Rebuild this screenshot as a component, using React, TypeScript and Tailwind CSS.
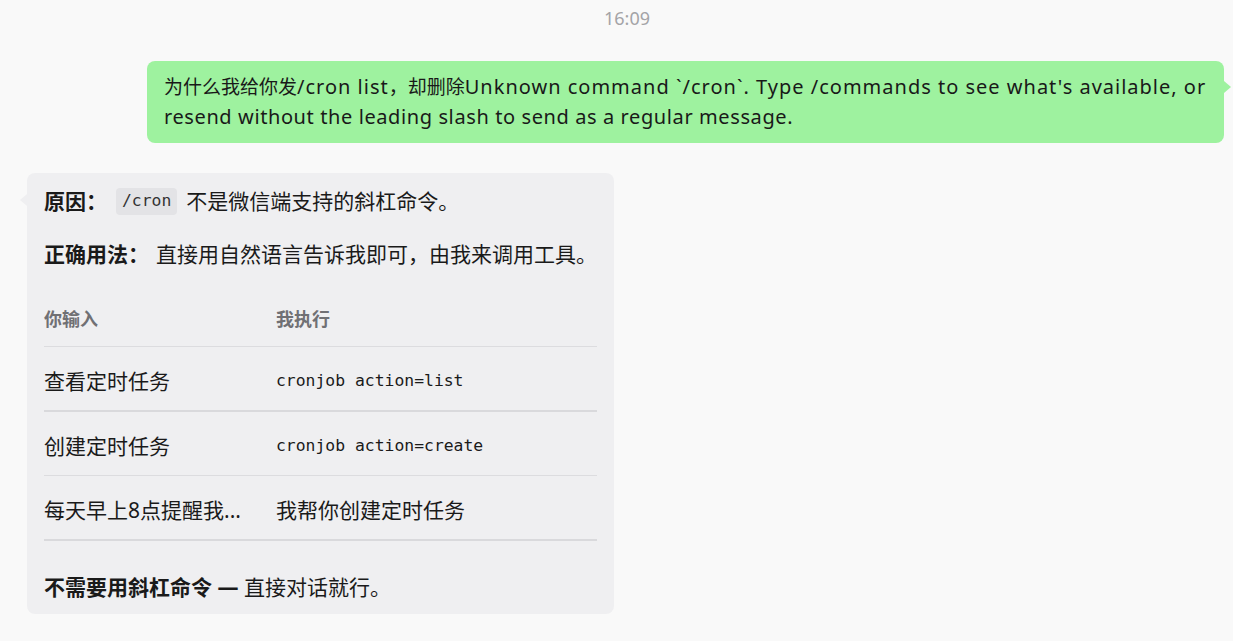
import React from "react";

const FONT = { fontFamily: '"Noto Sans", "Noto Sans CJK SC", sans-serif' };
const MONO = { fontFamily: '"DejaVu Sans Mono", "Liberation Mono", "Noto Sans CJK SC", monospace' };

function Row({ a, b, mono, thick, h }: { a: string; b: string; mono?: boolean; thick?: boolean; h: string }) {
  return (
    <div
      className={`flex ${h} items-center pt-[4px] ${thick ? "border-b-2 border-[#d9d9dc]" : "border-b border-[#dcdcdf]"}`}
    >
      <div className="w-[232px] shrink-0 text-[21px] leading-[30px] text-[#1a1a1a]">{a}</div>
      {mono ? (
        <div className="text-[16.4px] leading-[30px] text-[#1a1a1a]" style={MONO}>
          {b}
        </div>
      ) : (
        <div className="text-[21px] leading-[30px] text-[#1a1a1a]">{b}</div>
      )}
    </div>
  );
}

function C({ children }: { children: React.ReactNode }) {
  return <span className="text-[19px] tracking-normal">{children}</span>;
}

export default function App() {
  return (
    <div className="min-h-screen w-full bg-[#f9f9f9] flex flex-col" style={FONT}>
      <div className="pt-[7px] pl-[21px] text-center text-[18px] leading-[22px] text-[#a4a4a7]">16:09</div>

      <div className="mt-[32px] flex justify-end pr-[9px]">
        <div className="relative w-[1077px] rounded-[8px] bg-[#9ef29f] px-[17px] pt-[11px] pb-[12px] text-[20px] leading-[29px] text-[#191919]">
          <span className="tracking-[1px]">
            <C>为什么我给你发</C>/cron list<C>，却删除</C>Unknown command `/cron`. Type /commands to see what's available, or
          </span>
          <br />
          <span className="tracking-[0.6px]">resend without the leading slash to send as a regular message.</span>
          <span className="absolute left-full top-[20px] h-0 w-0 border-y-[6px] border-l-[7px] border-y-transparent border-l-[#9ef29f]" />
        </div>
      </div>

      <div className="mt-[30px] flex pl-[27px]">
        <div className="relative w-[587px] rounded-[8px] bg-[#efeff1] px-[17px] pt-[13px] pb-[12px] text-[#1a1a1a]">
          <span className="absolute right-full top-[21px] h-0 w-0 border-y-[6px] border-r-[7px] border-y-transparent border-r-[#efeff1]" />
          <div className="flex items-center h-[30px] text-[21px] leading-[30px]">
            <span className="font-bold">原因：</span>
            <span
              className="ml-[9px] inline-flex h-[27px] items-center rounded-[4px] bg-[#e3e3e6] px-[6px] text-[16.4px] text-[#333]"
              style={MONO}
            >
              /cron
            </span>
            <span className="ml-[9px]">不是微信端支持的斜杠命令。</span>
          </div>
          <div className="mt-[23px] flex h-[30px] items-center text-[21px] leading-[30px]">
            <span className="font-bold">正确用法：</span>
            <span className="ml-[7px]">直接用自然语言告诉我即可，由我来调用工具。</span>
          </div>

          <div className="mt-[24px]">
            <div className="flex h-[54px] items-center border-b border-[#dcdcdf] text-[18px] font-bold text-[#707074]">
              <div className="w-[232px] shrink-0">你输入</div>
              <div>我执行</div>
            </div>
            <Row a="查看定时任务" b="cronjob action=list" mono thick h="h-[65px]" />
            <Row a="创建定时任务" b="cronjob action=create" mono h="h-[64px]" />
            <Row a="每天早上8点提醒我..." b="我帮你创建定时任务" thick h="h-[65px]" />
          </div>

          <div className="mt-[31px] h-[30px] text-[21px] leading-[30px]">
            <span className="font-bold">不需要用斜杠命令 — </span>
            <span>直接对话就行。</span>
          </div>
        </div>
      </div>
    </div>
  );
}
